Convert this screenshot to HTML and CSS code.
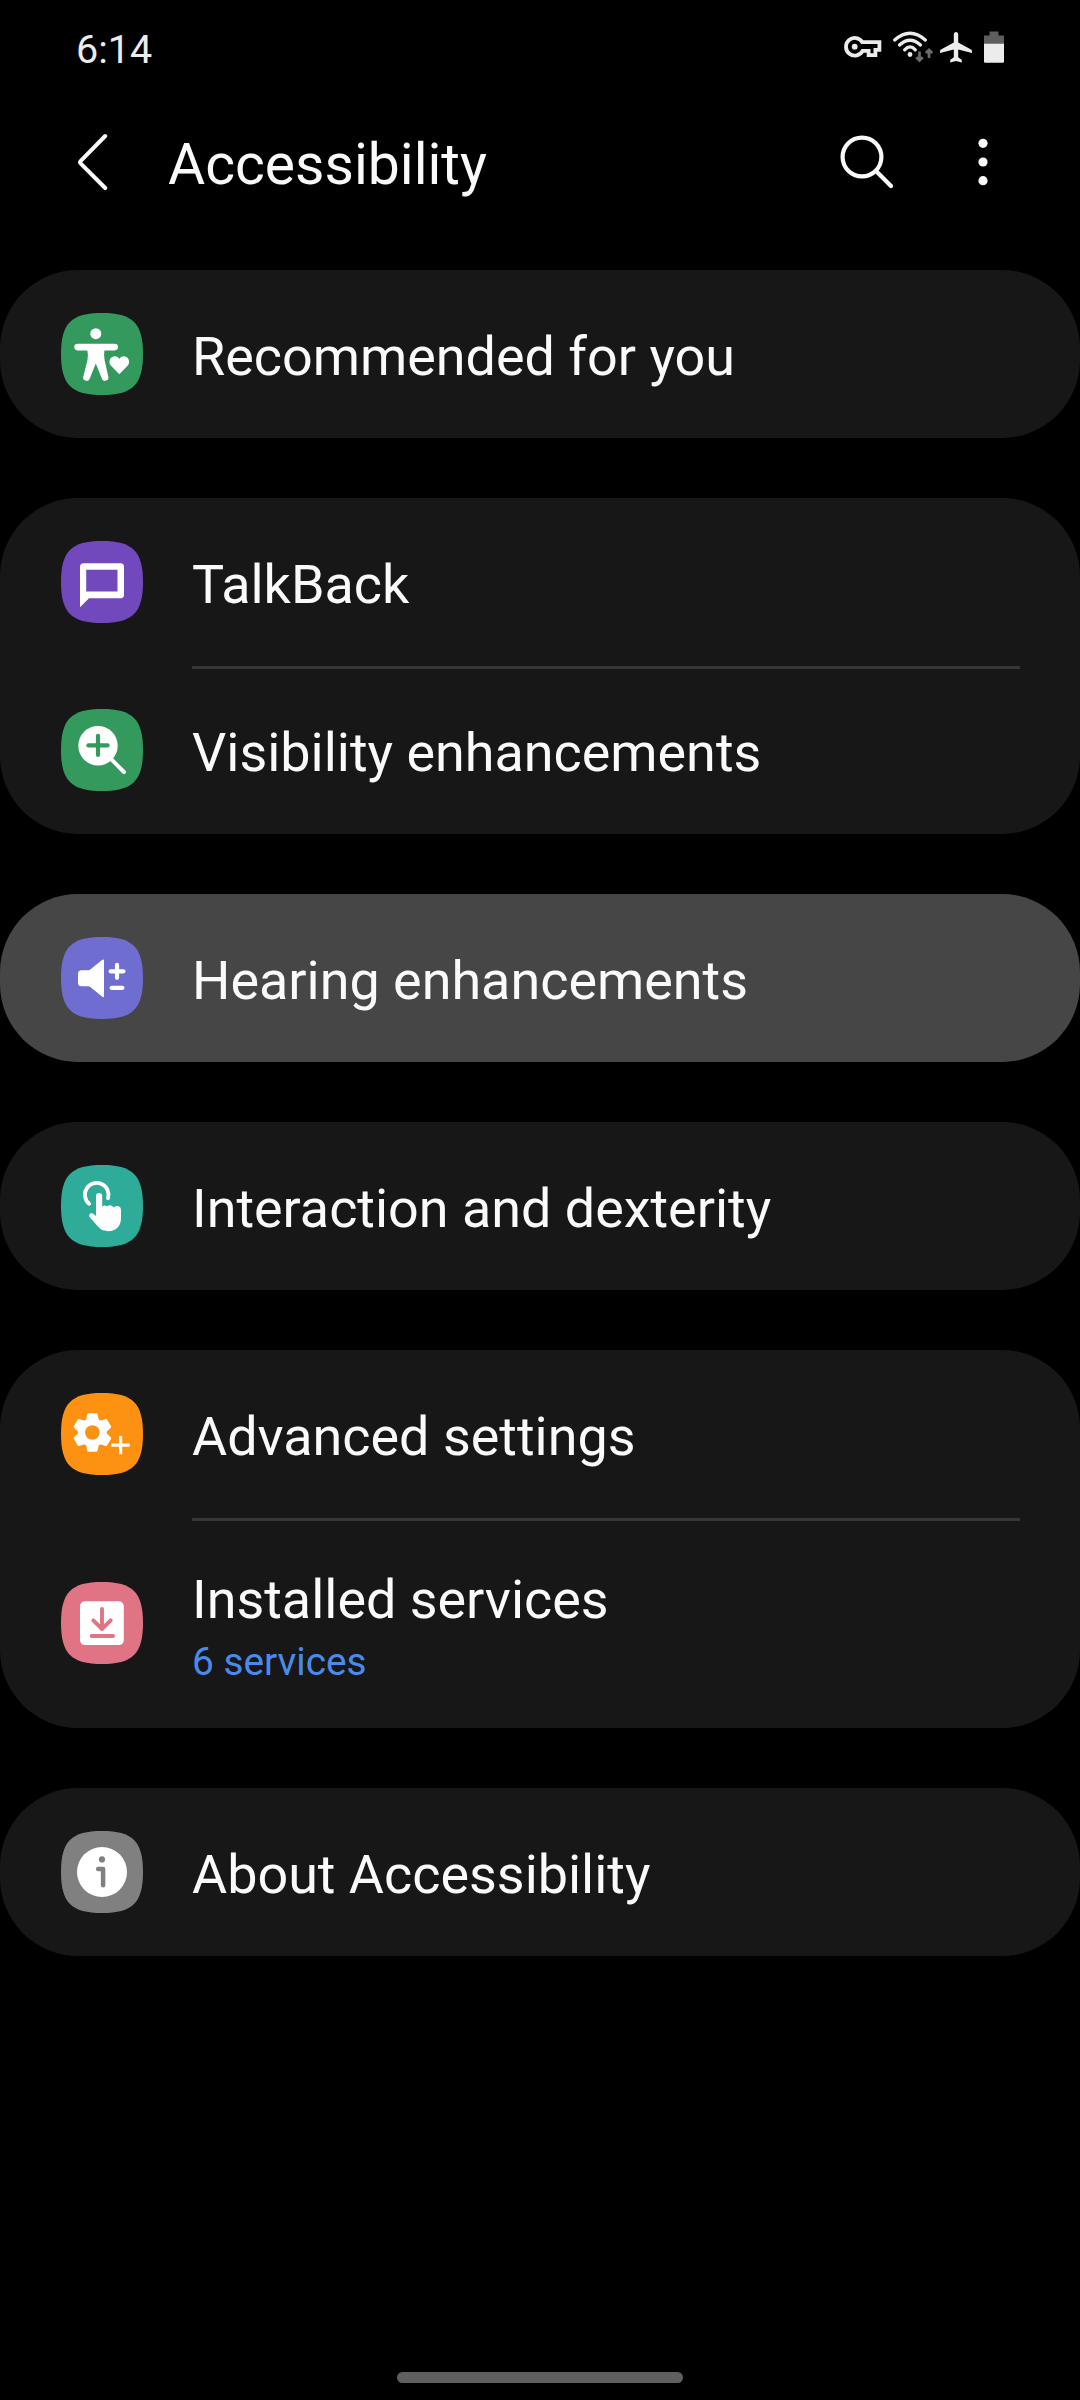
FILE: index.html
```
<!DOCTYPE html>
<html lang="en">
<head>
  <meta charset="UTF-8" />
  <title>Accessibility</title>
  <link rel="stylesheet" href="styles.css">
</head>
<body>

  <div class="status-bar">
    <span class="time">6:14</span>
    <div class="status-icons">
      <svg class="key" width="38" height="22" viewBox="0 0 38 22">
        <path d="M18.3 6.2H35.4V13.8H31.4V19.2H24.6V14.8H18.6A8.8 8.8 0 1 1 18.3 6.2Z" fill="none" stroke="#ececec" stroke-width="3.8"/>
        <circle cx="10.7" cy="10.7" r="2.9" fill="#ececec"/>
      </svg>
      <svg class="wifi" width="41" height="32" viewBox="0 0 41 32">
        <g fill="none" stroke="#ececec" stroke-width="3.3" stroke-linecap="round">
          <path d="M1.7 9Q17 -4.6 32.3 9"/>
          <path d="M6.5 14Q17 4.4 27.5 14"/>
          <path d="M11.7 18.8Q17 13 22.3 18.8"/>
        </g>
        <circle cx="17" cy="23.5" r="2.4" fill="#ececec"/>
        <path d="M26.5 20.5V29.5M23.3 26.3L26.5 29.5L29.7 26.3M36 27V18.8M32.8 22L36 18.8L39.2 22" fill="none" stroke="#6c6c6c" stroke-width="2.7"/>
      </svg>
      <svg class="plane" width="32" height="31" viewBox="0 0 32 31">
        <path d="M16 0C17.3 0 18.2 1.1 18.2 2.5V10.6L31 17.6Q32 18.2 32 19.3V21L18.2 17.4V25.3L21.8 28.1V30.4L16 29L10.2 30.4V28.1L13.8 25.3V17.4L0 21V19.3Q0 18.2 1 17.6L13.8 10.6V2.5C13.8 1.1 14.7 0 16 0Z" fill="#ececec"/>
      </svg>
      <svg class="battery" width="20" height="32" viewBox="0 0 20 32">
        <path d="M5.5 0.5H14.5V4.5H20V13H0V4.5H5.5Z" fill="#5e5e5e"/>
        <path d="M0 12.7H20V30.5Q20 31.7 18.8 31.7H1.2Q0 31.7 0 30.5Z" fill="#ececec"/>
      </svg>
    </div>
  </div>

  <header class="header">
    <svg class="back" width="32" height="58" viewBox="0 0 32 58">
      <path d="M28.2 3L3.8 27.9Q2.4 29.3 3.8 30.7L28.2 55" fill="none" stroke="#fafafa" stroke-width="4" stroke-linecap="round"/>
    </svg>
    <h1>Accessibility</h1>
    <svg class="search" width="54" height="54" viewBox="0 0 54 54">
      <circle cx="22" cy="22" r="19.4" fill="none" stroke="#fafafa" stroke-width="4.2"/>
      <path d="M36 36L51 51" stroke="#fafafa" stroke-width="4.2" stroke-linecap="round"/>
    </svg>
    <svg class="more" width="10" height="48" viewBox="0 0 10 48">
      <g fill="#fafafa">
        <circle cx="5" cy="5.3" r="4.6"/>
        <circle cx="5" cy="24" r="4.6"/>
        <circle cx="5" cy="42.7" r="4.6"/>
      </g>
    </svg>
  </header>

  <main>
    <section class="card">
      <div class="row">
        <svg class="icon green" viewBox="0 0 82 82">
          <path class="tile" d="M41 0C71.7 0 82 10.3 82 41S71.7 82 41 82S0 71.7 0 41S10.3 0 41 0Z"/>
          <g fill="#fff">
            <circle cx="34.8" cy="20.7" r="5.5"/>
            <rect x="13.3" y="30.7" width="43.7" height="6.7" rx="3.3"/>
            <path d="M26 35H43.6Q42.6 42 43.6 47L47.2 63.2A3.4 3.4 0 0 1 40.8 65.6L34.8 50.5L28.8 65.6A3.4 3.4 0 0 1 22.4 63.2L26.5 47Q27.5 42 26 35Z"/>
            <path d="M58.3 61.3L49.8 52.6C47.6 50.2 48 46 51.2 44C53.8 42.6 57 43.4 58.3 46C59.6 43.4 62.8 42.6 65.4 44C68.6 46 69 50.2 66.8 52.6Z"/>
          </g>
        </svg>
        <div class="label">Recommended for you</div>
      </div>
    </section>

    <section class="card">
      <div class="row">
        <svg class="icon purple" viewBox="0 0 82 82">
          <path class="tile" d="M41 0C71.7 0 82 10.3 82 41S71.7 82 41 82S0 71.7 0 41S10.3 0 41 0Z"/>
          <path fill="#fff" fill-rule="evenodd" d="M22.5 22.2H59.5Q63 22.2 63 25.7V53.8Q63 57.3 59.5 57.3H28L19 66.3V25.7Q19 22.2 22.5 22.2ZM25.2 28.8V50.5H56.5V28.8Z"/>
        </svg>
        <div class="label">TalkBack</div>
      </div>
      <div class="row divided">
        <svg class="icon green" viewBox="0 0 82 82">
          <path class="tile" d="M41 0C71.7 0 82 10.3 82 41S71.7 82 41 82S0 71.7 0 41S10.3 0 41 0Z"/>
          <circle cx="37" cy="36.7" r="19.7" fill="#fff"/>
          <path class="cut" d="M37 26.8V46M27.4 36.4H46.6" stroke-width="4.2"/>
          <path class="line" d="M50 50L63 63" stroke-width="3.9"/>
        </svg>
        <div class="label">Visibility enhancements</div>
      </div>
    </section>

    <section class="card pressed">
      <div class="row">
        <svg class="icon indigo" viewBox="0 0 82 82">
          <path class="tile" d="M41 0C71.7 0 82 10.3 82 41S71.7 82 41 82S0 71.7 0 41S10.3 0 41 0Z"/>
          <path fill="#fff" d="M20.5 33.2H27.5Q28.5 33.2 29.3 32.6L41 23Q43 21.6 43 23.6V59Q43 61 41 59.6L29.3 50Q28.5 49.3 27.5 49.3H20.5Q17 49.3 17 45.8V36.7Q17 33.2 20.5 33.2Z"/>
          <path class="line" d="M56 27.8V40.8M49.6 34.3H62.5M50.6 50.8H61.4" stroke-width="4.2"/>
        </svg>
        <div class="label">Hearing enhancements</div>
      </div>
    </section>

    <section class="card">
      <div class="row">
        <svg class="icon teal" viewBox="0 0 82 82">
          <path class="tile" d="M41 0C71.7 0 82 10.3 82 41S71.7 82 41 82S0 71.7 0 41S10.3 0 41 0Z"/>
          <path class="line" d="M28.2 38.8A11.8 11.8 0 1 1 47 33.2" stroke-width="3.8"/>
          <path fill="#fff" d="M35 51V31.2A3.1 3.1 0 0 1 41.2 31.2V41.5Q43.8 39.3 46.3 41.6Q48.2 39.6 50.6 40.8Q52 41.3 53 42.4Q55 40.5 57.3 41.2Q60 42 60 45V53C60 61.5 54.5 66.2 47.5 66.2C42.5 66.2 39.8 64.8 37.2 61.8L28.8 52.2C27 49.8 29.6 47.2 32.2 48.8Z"/>
        </svg>
        <div class="label">Interaction and dexterity</div>
      </div>
    </section>

    <section class="card">
      <div class="row">
        <svg class="icon orange" viewBox="0 0 82 82">
          <path class="tile" d="M41 0C71.7 0 82 10.3 82 41S71.7 82 41 82S0 71.7 0 41S10.3 0 41 0Z"/>
          <g transform="translate(31.4 39.5)">
            <g fill="#fff">
              <circle r="14.2"/>
              <path id="tooth" d="M-4 -19.2H4Q4.8 -19.2 5 -18.4L6.2 -13.4L7.6 -10H-7.6L-6.2 -13.4L-5 -18.4Q-4.8 -19.2 -4 -19.2Z"/>
              <use href="#tooth" transform="rotate(60)"/>
              <use href="#tooth" transform="rotate(120)"/>
              <use href="#tooth" transform="rotate(180)"/>
              <use href="#tooth" transform="rotate(240)"/>
              <use href="#tooth" transform="rotate(300)"/>
            </g>
            <circle class="tile" r="7.3"/>
          </g>
          <path d="M59.6 43V61.2M50.5 52.1H68.7" stroke="#fff" stroke-width="3.2"/>
        </svg>
        <div class="label">Advanced settings</div>
      </div>
      <div class="row tall divided">
        <svg class="icon pink" viewBox="0 0 82 82">
          <path class="tile" d="M41 0C71.7 0 82 10.3 82 41S71.7 82 41 82S0 71.7 0 41S10.3 0 41 0Z"/>
          <rect x="19" y="19.3" width="43.8" height="43.8" rx="5" fill="#fff"/>
          <path class="cut" d="M41 27V47M32.3 38.3L41 47L49.7 38.3M30.7 54H52" stroke-width="3.9"/>
        </svg>
        <div class="label">
          Installed services
          <div class="sub">6 services</div>
        </div>
      </div>
    </section>

    <section class="card">
      <div class="row">
        <svg class="icon gray" viewBox="0 0 82 82">
          <path class="tile" d="M41 0C71.7 0 82 10.3 82 41S71.7 82 41 82S0 71.7 0 41S10.3 0 41 0Z"/>
          <circle cx="41" cy="41" r="25" fill="#fff"/>
          <circle class="tile" cx="41" cy="28.4" r="3.1"/>
          <path class="cut" d="M37.2 38H42.1V54.2" stroke-width="4.5"/>
        </svg>
        <div class="label">About Accessibility</div>
      </div>
    </section>
  </main>

  <footer class="nav-bar">
    <div class="handle"></div>
  </footer>

</body>
</html>
```
FILE: styles.css
```
* {
  box-sizing: border-box;
}

body {
  margin: 0;
  width: 1080px;
  height: 2400px;
  display: flex;
  flex-direction: column;
  background: #000;
  color: #fafafa;
  font-family: Roboto, sans-serif;
  overflow: hidden;
}

svg {
  display: block;
  flex-shrink: 0;
}

.status-bar {
  height: 96px;
  padding: 0 76px;
  display: flex;
  justify-content: space-between;
  align-items: center;
}

.time {
  font-size: 39.5px;
  color: #ececec;
  padding-top: 3px;
}

.status-icons {
  display: flex;
  align-items: center;
  height: 32px;
  margin-bottom: 2px;
}

.wifi {
  margin-left: 11px;
}

.plane {
  margin-left: 6px;
}

.battery {
  margin-left: 12px;
}

.header {
  height: 132px;
  padding: 0 92px 0 77px;
  display: flex;
  align-items: center;
}

h1 {
  flex: 1;
  margin: 0 0 0 59px;
  padding-top: 4px;
  font-size: 57px;
  font-weight: 400;
}

.search {
  margin-right: 84px;
}

main {
  flex: 1;
  padding-top: 42px;
  display: flex;
  flex-direction: column;
  gap: 60px;
}

.card {
  background: #171717;
  border-radius: 78px;
}

.card.pressed {
  background: #464646;
}

.row {
  position: relative;
  height: 168px;
  padding: 0 60px 0 61px;
  display: flex;
  align-items: center;
}

.row.tall {
  height: 210px;
}

/* line starts under the text, not under the icon */
.divided::before {
  content: "";
  position: absolute;
  top: 0;
  left: 192px;
  right: 60px;
  height: 3px;
  background: #373737;
}

.icon {
  width: 82px;
  height: 82px;
  margin-right: 49px;
}

.label {
  padding-top: 6px;
  font-size: 53.9px;
  line-height: 64px;
}

.sub {
  font-size: 38.8px;
  line-height: 46px;
  padding-top: 7px;
  color: #4a8bea;
}

.tile {
  fill: currentColor;
}

.cut {
  fill: none;
  stroke: currentColor;
  stroke-linecap: round;
  stroke-linejoin: round;
}

.line {
  fill: none;
  stroke: #fff;
  stroke-linecap: round;
}

.green {
  color: #34995d;
}

.purple {
  color: #7248bd;
}

.indigo {
  color: #706dd0;
}

.teal {
  color: #2eac99;
}

.orange {
  color: #fd9212;
}

.pink {
  color: #e07484;
}

.gray {
  color: #808080;
}

.nav-bar {
  height: 28px;
  display: flex;
  justify-content: center;
}

.handle {
  width: 286px;
  height: 11px;
  border-radius: 6px;
  background: #5f5f5f;
}
```
